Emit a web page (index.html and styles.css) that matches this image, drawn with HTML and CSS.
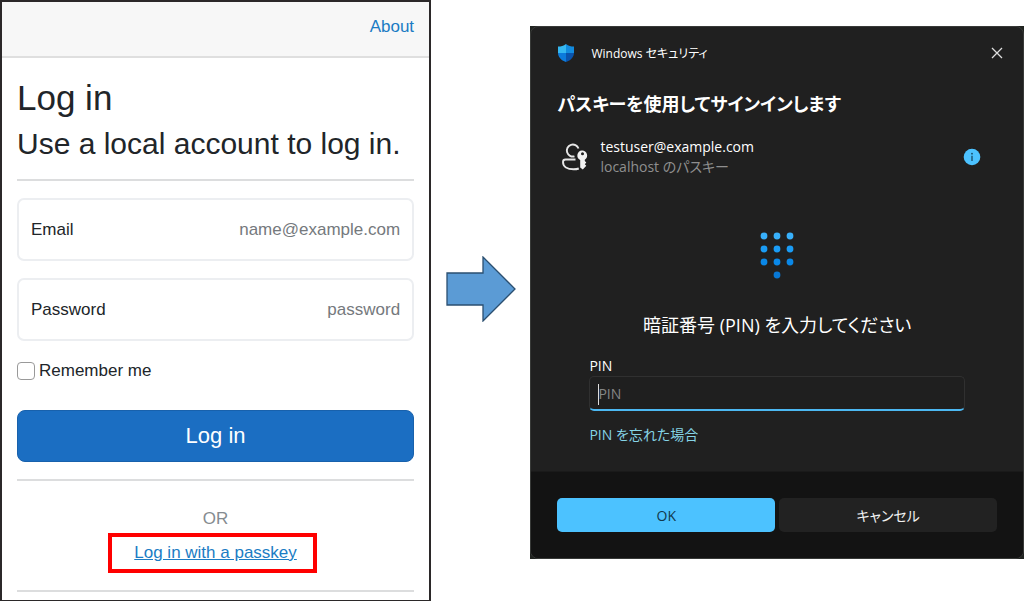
FILE: index.html
```html
<!DOCTYPE html>
<html lang="ja">
<head>
    <meta charset="UTF-8">
    <meta name="viewport" content="width=device-width, initial-scale=1.0">
    <title>Log in with a passkey</title>
    <link rel="stylesheet" href="styles.css">
</head>
<body>

<!-- Login page -->
<section class="login" lang="en">
    <header class="top-row">
        <a href="#">About</a>
    </header>
    <form class="login-form">
        <h1>Log in</h1>
        <h2>Use a local account to log in.</h2>
        <hr>
        <div class="field">
            <label for="email">Email</label>
            <input type="email" id="email" placeholder="name@example.com">
        </div>
        <div class="field">
            <label for="password">Password</label>
            <input type="password" id="password" placeholder="password">
        </div>
        <div class="remember">
            <input type="checkbox" id="remember">
            <label for="remember">Remember me</label>
        </div>
        <button type="button" class="login-button">Log in</button>
        <hr>
        <div class="other">
            <p>OR</p>
            <a href="#" class="passkey-link">Log in with a passkey</a>
        </div>
        <hr>
    </form>
</section>

<!-- Arrow between the two steps -->
<svg class="arrow" width="70" height="66" viewBox="0 0 70 66">
    <path d="M1 17H37V1L69 33L37 65V49H1Z" fill="#5b9bd5" stroke="#2b4f70" stroke-width="1.3"/>
</svg>

<!-- Windows security dialog -->
<div class="backdrop">
    <section class="dialog">
        <div class="dialog-body">
            <header class="title-bar">
                <svg width="18" height="20" viewBox="0 0 18 20">
                    <defs>
                        <clipPath id="shield">
                            <path d="M9 1C11.300 2.800 14 3.600 17 3.600V9.500C17 14 14 17.200 9 19C4 17.200 1 14 1 9.500V3.600C4 3.600 6.700 2.800 9 1Z"/>
                        </clipPath>
                    </defs>
                    <g clip-path="url(#shield)">
                        <rect width="9" height="10" fill="#35b8f1"/>
                        <rect x="9" width="9" height="10" fill="#128bdf"/>
                        <rect y="10" width="9" height="10" fill="#0c7bdc"/>
                        <rect x="9" y="10" width="9" height="10" fill="#0a54ad"/>
                    </g>
                </svg>
                <span>Windows セキュリティ</span>
                <button type="button" class="close" aria-label="閉じる">
                    <svg width="12" height="12" viewBox="0 0 12 12">
                        <path d="M1 1L11 11M11 1L1 11" stroke="#dedede" stroke-width="1.300"/>
                    </svg>
                </button>
            </header>
            <h3>パスキーを使用してサインインします</h3>
            <div class="account">
                <svg width="28" height="28" viewBox="0 0 28 28" fill="none" stroke="#e6e6e6" stroke-width="1.900">
                    <path d="M17.500 5.500A6 6 0 1 0 13.500 13.300M14.500 16.500H4.500C2.800 16.500 2 17.500 2 19C2 23.800 6.500 26.300 12.500 26.300C14.600 26.300 16.300 26.100 17.800 25.500"/>
                    <path fill="#f2f2f2" stroke="none" fill-rule="evenodd" d="M21 7.500A5 5 0 0 1 23.800 16.700V18L25.300 19.600L23.800 21.200L25.300 22.800L21.800 26.500L19.200 24.500V17A5 5 0 0 1 21 7.500ZM21.500 9.300A1.500 1.500 0 1 0 21.500 12.300A1.500 1.500 0 0 0 21.500 9.300Z"/>
                </svg>
                <div class="account-text">
                    <div>testuser@example.com</div>
                    <div class="sub">localhost のパスキー</div>
                </div>
                <svg class="info" width="18" height="18" viewBox="0 0 18 18">
                    <circle cx="9" cy="9" r="8.300" fill="#4cc2ff"/>
                    <circle cx="9" cy="5.700" r="0.900" fill="#164a66"/>
                    <path d="M9 7.700V13" stroke="#164a66" stroke-width="1.300"/>
                </svg>
            </div>
            <svg class="keypad" width="34" height="48" viewBox="0 0 34 48">
                <g fill="#38b0fb"><circle cx="4" cy="5" r="3.400"/><circle cx="17" cy="5" r="3.400"/><circle cx="30" cy="5" r="3.400"/></g>
                <g fill="#1a9cf5"><circle cx="4" cy="18" r="3.400"/><circle cx="17" cy="18" r="3.400"/><circle cx="30" cy="18" r="3.400"/></g>
                <g fill="#0a88e8"><circle cx="4" cy="31" r="3.400"/><circle cx="17" cy="31" r="3.400"/><circle cx="30" cy="31" r="3.400"/></g>
                <circle cx="17" cy="44" r="3.400" fill="#0878d4"/>
            </svg>
            <p class="prompt">暗証番号 (PIN) を入力してください</p>
            <div class="pin">
                <label for="pin">PIN</label>
                <input type="password" id="pin" placeholder="PIN">
                <a href="#">PIN を忘れた場合</a>
            </div>
        </div>
        <footer class="dialog-buttons">
            <button type="button" class="ok">OK</button>
            <button type="button" class="cancel">キャンセル</button>
        </footer>
    </section>
</div>

</body>
</html>
```

FILE: styles.css
```css
* {
    box-sizing: border-box;
}
body {
    margin: 0;
    min-height: 100vh;
    display: flex;
    align-items: flex-start;
    background-color: #fff;
    font-family: "Liberation Sans", Arial, sans-serif;
    font-size: 17px;
}
input, button {
    font: inherit;
}

/* Login page */
.login {
    flex: 0 0 42.1%;
    min-height: 100vh;
    border: 2px solid #2b2829;
    color: #212529;
}
.top-row {
    height: 56px;
    padding: 14px 15px;
    background-color: #f7f7f7;
    border-bottom: 2px solid #dfdfdf;
    text-align: right;
    line-height: 22px;
}
.login a {
    color: #1b7cc4;
}
.top-row a {
    text-decoration: none;
}
.login-form {
    padding: 0 15px;
}
h1, h2, h3, p {
    margin: 0;
    font-weight: normal;
}
h1 {
    margin-top: 19px;
    font-size: 35px;
    line-height: 42px;
}
h2 {
    margin-top: 6px;
    font-size: 30px;
    line-height: 38px;
}
hr {
    margin: 17px 0;
    border: none;
    border-top: 2px solid #dcddde;
}
h2 + hr {
    margin-top: 16px;
}
.field {
    display: flex;
    align-items: center;
    height: 63px;
    margin-bottom: 17px;
    padding: 0 12px;
    border: 2px solid #eceef1;
    border-radius: 7px;
}
.field input {
    flex: 1;
    min-width: 0;
    padding: 0;
    border: none;
    outline: none;
    background: none;
    text-align: right;
}
.field input::placeholder {
    color: #75797d;
    opacity: 1;
}
.remember {
    display: flex;
    align-items: center;
    gap: 4px;
    height: 26px;
    margin-bottom: 26px;
}
.remember input {
    appearance: none;
    width: 18px;
    height: 18px;
    margin: 0;
    border: 1px solid #999;
    border-radius: 4px;
}
.login-button {
    display: block;
    width: 100%;
    height: 52px;
    border: 1px solid #1861ac;
    border-radius: 8px;
    background-color: #1b6ec2;
    color: #fff;
    font-size: 22px;
}
.other {
    margin-top: 26px;
    text-align: center;
    line-height: 24px;
}
.other p {
    margin-bottom: 10px;
    color: #858b90;
}
.passkey-link {
    position: relative;
    display: inline-block;
}
/* Red highlight around the link */
.passkey-link::after {
    content: "";
    position: absolute;
    inset: -8px -20px -8px -26px;
    border: 4px solid #f00;
}
.other + hr {
    margin: 25px 0 8px;
}

.arrow {
    flex: none;
    align-self: center;
    margin: 0 auto;
    position: relative;
    top: -12px;
}

/* Windows security dialog */
.backdrop {
    flex: 0 0 48.2%;
    margin-top: 26px;
    background-color: #202320;
}
.dialog {
    overflow: hidden;
    border: 1px solid #383a38;
    border-radius: 8px;
    background-color: #202020;
    color: #fff;
    font-family: "Open Sans", "Noto Sans CJK JP", sans-serif;
    font-size: 14px;
    font-feature-settings: "palt";
}
.dialog-body {
    padding: 13px 26px 26px;
    border-bottom: 1px solid #1a1a1a;
}
.title-bar {
    display: flex;
    align-items: center;
    height: 26px;
    font-size: 12px;
}
.title-bar span {
    margin-left: 16px;
}
.close {
    display: flex;
    margin-left: auto;
    margin-right: -6px;
    padding: 0;
    border: none;
    background: none;
}
h3 {
    margin-top: 23px;
    font-size: 18px;
    font-weight: bold;
    line-height: 30px;
}
.account {
    display: flex;
    align-items: center;
    margin: 18px 16px 0 4px;
}
.account-text {
    margin-left: 11px;
    line-height: 20px;
}
.sub {
    color: #8f8f8f;
}
.info {
    margin-left: auto;
}
.keypad {
    display: block;
    margin: 54px auto 0;
}
.prompt {
    margin-top: 31px;
    font-size: 18px;
    line-height: 30px;
    text-align: center;
}
.pin {
    display: flex;
    flex-direction: column;
    align-items: flex-start;
    margin: 16px 32px 0;
    line-height: 20px;
}
.pin input {
    width: 100%;
    height: 35px;
    padding: 0 8px;
    border: 1px solid #303030;
    border-bottom: 2px solid #4cb8f2;
    border-radius: 5px;
    outline: none;
    /* text caret */
    background: linear-gradient(#ddd, #ddd) 8px 7px / 1px 21px no-repeat #1f1f1f;
    color: #fff;
}
.pin input::placeholder {
    color: #868686;
    opacity: 1;
}
.pin a {
    margin-top: 14px;
    color: #86d4e6;
    text-decoration: none;
}
.dialog-buttons {
    display: flex;
    gap: 4px;
    padding: 26px;
    background-color: #131313;
}
.dialog-buttons button {
    flex: 1;
    height: 34px;
    border: none;
    border-radius: 5px;
    font-feature-settings: "palt";
}
.ok {
    background-color: #4cc2ff;
    color: #12384c;
}
.cancel {
    background-color: #222;
    color: #f2f2f2;
}
```
